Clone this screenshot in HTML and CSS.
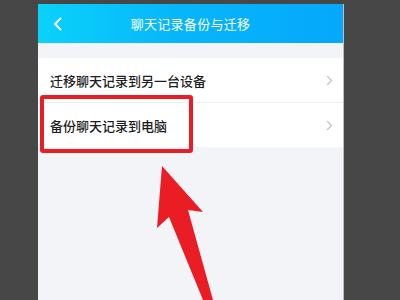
FILE: index.html
```html
<!DOCTYPE html>
<html lang="zh-CN">

<head>
    <meta charset="UTF-8">
    <meta name="viewport" content="width=device-width, initial-scale=1.0">
    <title>聊天记录备份与迁移</title>
    <link rel="stylesheet" href="styles.css">
</head>

<body>
    <div class="phone">
        <!-- Barra superior -->
        <div class="top-bar">
            <svg class="back" width="10" height="14" viewBox="0 0 10 14">
                <path d="M7.5 1.5 L2 7 L7.5 12.5" fill="none" stroke="#fff" stroke-width="2" stroke-linecap="round" stroke-linejoin="round" />
            </svg>
            <span class="title">聊天记录备份与迁移</span>
        </div>

        <div class="gap"></div>

        <!-- Lista de opções -->
        <ul class="menu">
            <li class="menu-item">
                <span>迁移聊天记录到另一台设备</span>
                <svg class="arrow" width="7" height="11" viewBox="0 0 7 11">
                    <path d="M1.5 1.5 L5.5 5.5 L1.5 9.5" fill="none" stroke="#c4c5cc" stroke-width="1.4" stroke-linecap="round" stroke-linejoin="round" />
                </svg>
            </li>
            <li class="menu-item">
                <span>备份聊天记录到电脑</span>
                <svg class="arrow" width="7" height="11" viewBox="0 0 7 11">
                    <path d="M1.5 1.5 L5.5 5.5 L1.5 9.5" fill="none" stroke="#c4c5cc" stroke-width="1.4" stroke-linecap="round" stroke-linejoin="round" />
                </svg>
            </li>
        </ul>
    </div>

    <!-- Marcação vermelha -->
    <div class="highlight"></div>
    <svg class="pointer" width="400" height="300" viewBox="0 0 400 300">
        <polygon points="162,166 203,212 188,210 213,300 203,300 169,217 157,228" fill="#ea1c24" />
    </svg>
</body>

</html>
```

FILE: styles.css
```css
/* Estilo geral */
body {
    margin: 0;
    padding: 0;
    background-color: #474747;
    font-family: "Noto Sans CJK SC", "Noto Sans", sans-serif;
    height: 300px;
    overflow: hidden;
    position: relative;
}

.phone {
    margin: 4px 0 0 38px;
    width: 305px;
    height: 300px;
    background-color: #f3f4f8;
    border-right: 1px solid #bdbdc2;
}

/* Barra superior */
.top-bar {
    height: 39px;
    background: linear-gradient(90deg, #0ad2fa 0%, #07b6fa 45%, #05a8fb 100%);
    display: flex;
    align-items: center;
    position: relative;
}

.back {
    margin-left: 15px;
}

.title {
    flex: 1;
    text-align: center;
    color: #fff;
    font-size: 13px;
    margin-right: 25px;
    letter-spacing: 0.3px;
}

.gap {
    height: 15px;
}

/* Lista */
.menu {
    list-style: none;
    margin: 0;
    padding: 0;
    background-color: #fff;
}

.menu-item {
    height: 44px;
    display: flex;
    align-items: center;
    justify-content: space-between;
    padding: 0 10px 0 12px;
    font-size: 13px;
    font-weight: 500;
    color: #1e1e22;
    border-bottom: 1px solid #eeeef2;
}

.menu-item:last-child {
    border-bottom: none;
}

/* Marcação */
.highlight {
    position: absolute;
    left: 40px;
    top: 95px;
    width: 145px;
    height: 50px;
    border: 4px solid #ea1c24;
    border-radius: 3px;
}

.pointer {
    position: absolute;
    left: 0;
    top: 0;
}
```
